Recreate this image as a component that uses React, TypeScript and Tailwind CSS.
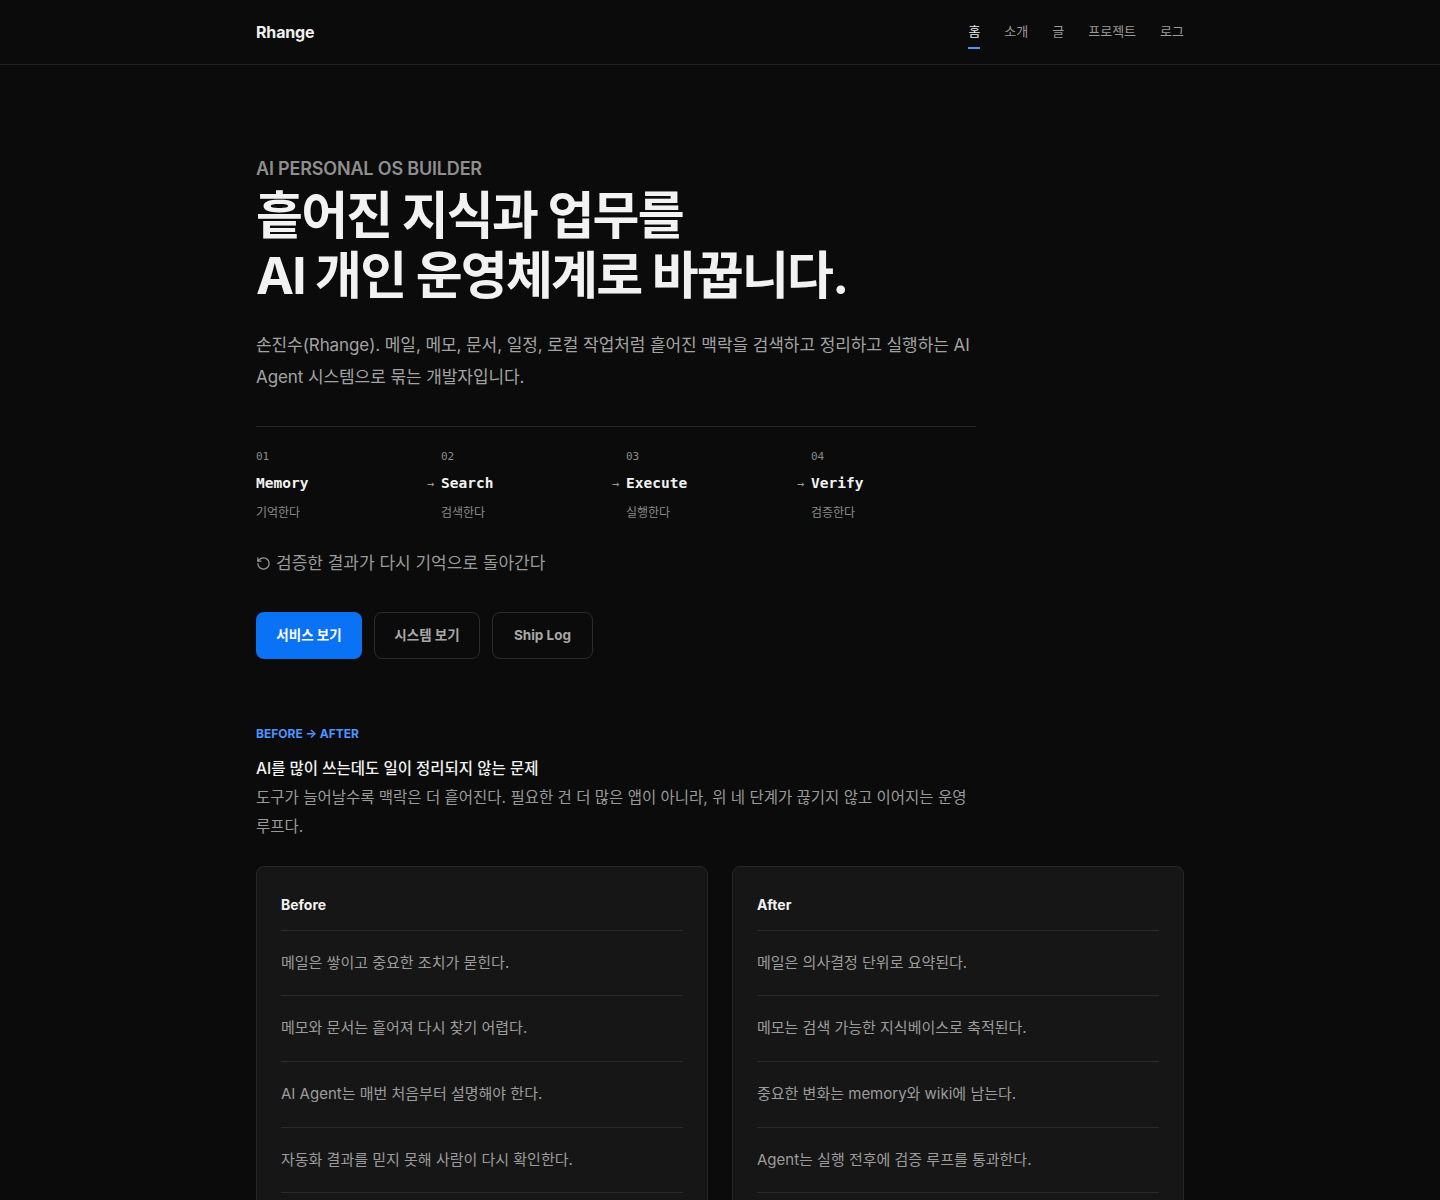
import React from "react";
import { RotateCcw } from "lucide-react";

const sans = { fontFamily: 'Inter, "Noto Sans CJK KR", sans-serif' };
const mono = { fontFamily: '"DejaVu Sans Mono", "Noto Sans CJK KR", monospace' };

const steps = [
  { n: "01", t: "Memory", k: "기억한다" },
  { n: "02", t: "Search", k: "검색한다" },
  { n: "03", t: "Execute", k: "실행한다" },
  { n: "04", t: "Verify", k: "검증한다" },
];

const before = [
  "메일은 쌓이고 중요한 조치가 묻힌다.",
  "메모와 문서는 흩어져 다시 찾기 어렵다.",
  "AI Agent는 매번 처음부터 설명해야 한다.",
  "자동화 결과를 믿지 못해 사람이 다시 확인한다.",
];

const after = [
  "메일은 의사결정 단위로 요약된다.",
  "메모는 검색 가능한 지식베이스로 축적된다.",
  "중요한 변화는 memory와 wiki에 남는다.",
  "Agent는 실행 전후에 검증 루프를 통과한다.",
];

function Card({ title, items }: { title: string; items: string[] }) {
  return (
    <div className="rounded-lg border border-[#262626] bg-[#161616] px-6 pt-[28px]">
      <div className="pb-[15px] text-[14px] font-bold leading-5 text-[#f2f2f2]">{title}</div>
      {items.map((it) => (
        <div
          key={it}
          className="flex h-[65.7px] items-center border-t border-[#2a2a2a] text-[15px] text-[#9c9c9c]"
        >
          {it}
        </div>
      ))}
      <div className="h-8 border-t border-[#2a2a2a]" />
    </div>
  );
}

export default function App() {
  return (
    <div className="min-h-screen bg-[#0b0b0b] text-white antialiased" style={sans}>
      <header className="border-b border-[#1f1f1f]">
        <div className="mx-auto flex h-16 max-w-[928px] items-center justify-between">
          <div className="text-[16px] font-bold tracking-[-0.01em] text-[#f0f0f0]">Rhange</div>
          <nav className="flex items-center gap-6 text-[13px]">
            <div className="relative text-[#ededed]">
              홈
              <span className="absolute left-0 right-0 top-[25px] h-[2px] bg-[#4d94ff]" />
            </div>
            <div className="text-[#9a9a9a]">소개</div>
            <div className="text-[#9a9a9a]">글</div>
            <div className="text-[#9a9a9a]">프로젝트</div>
            <div className="text-[#9a9a9a]">로그</div>
          </nav>
        </div>
      </header>

      <main className="mx-auto max-w-[928px] pt-[90px]">
        <section className="max-w-[720px]">
          <div className="text-[18px] font-semibold tracking-[-0.01em] text-[#8f8f8f]">
            AI PERSONAL OS BUILDER
          </div>
          <h1 className="mt-[4px] text-[51px] font-bold leading-[60px] tracking-[-0.035em] text-[#f2f2f2]">
            흩어진 지식과 업무를
            <br />
            AI 개인 운영체계로 바꿉니다.
          </h1>
          <p className="mt-[23px] text-[17px] leading-[32px] tracking-[-0.005em] text-[#a3a3a3]">
            손진수(Rhange). 메일, 메모, 문서, 일정, 로컬 작업처럼 흩어진 맥락을 검색하고 정리하고 실행하는 AI
            Agent 시스템으로 묶는 개발자입니다.
          </p>

          <div className="mt-[33px] grid grid-cols-4 gap-x-5 border-t border-[#262626] pt-[22px]">
            {steps.map((s, i) => (
              <div key={s.n} style={mono}>
                <div className="text-[11px] leading-4 text-[#8a8a8a]">{s.n}</div>
                <div className="relative mt-[8px] text-[14.5px] font-bold leading-5 text-[#f2f2f2]">
                  {i > 0 && (
                    <span className="absolute left-[-14px] top-[1px] text-[12px] font-normal text-[#9a9a9a]">
                      →
                    </span>
                  )}
                  {s.t}
                </div>
                <div className="mt-[12px] text-[12px] leading-4 text-[#8a8a8a]">{s.k}</div>
              </div>
            ))}
          </div>

          <div className="mt-[30px] flex items-center gap-[5px] text-[17px] text-[#9a9a9a]">
            <RotateCcw size={15} strokeWidth={2} className="text-[#9a9a9a]" />
            <span>검증한 결과가 다시 기억으로 돌아간다</span>
          </div>

          <div className="mt-[35px] flex gap-3">
            <button className="h-[47px] w-[106px] rounded-lg bg-[#0a72f5] text-[13.5px] font-bold text-white">
              서비스 보기
            </button>
            <button className="h-[47px] w-[106px] rounded-lg border border-[#2c2c2c] text-[13.5px] font-bold text-[#a8a8a8]">
              시스템 보기
            </button>
            <button className="h-[47px] w-[101px] rounded-lg border border-[#2c2c2c] text-[13.5px] font-bold text-[#a8a8a8]">
              Ship Log
            </button>
          </div>
        </section>

        <section className="mt-[66px]">
          <div className="text-[12px] font-bold text-[#4d94ff]">BEFORE → AFTER</div>
          <h2 className="mt-[15px] text-[15.5px] font-medium leading-[22px] text-[#f2f2f2]">
            AI를 많이 쓰는데도 일이 정리되지 않는 문제
          </h2>
          <p className="mt-[3px] max-w-[720px] text-[15.5px] leading-[29px] text-[#9a9a9a]">
            도구가 늘어날수록 맥락은 더 흩어진다. 필요한 건 더 많은 앱이 아니라, 위 네 단계가 끊기지 않고 이어지는 운영
            루프다.
          </p>

          <div className="mt-[25px] grid grid-cols-2 gap-6 pb-16">
            <Card title="Before" items={before} />
            <Card title="After" items={after} />
          </div>
        </section>
      </main>
    </div>
  );
}
